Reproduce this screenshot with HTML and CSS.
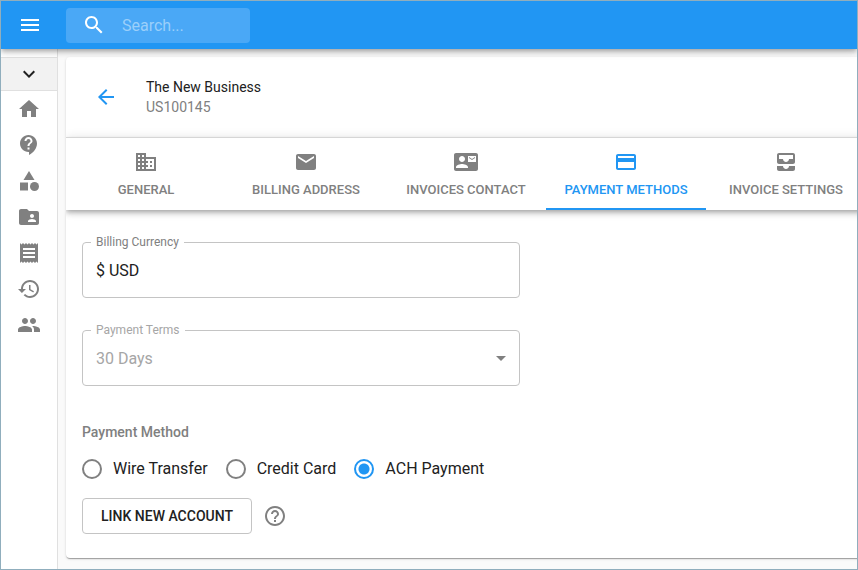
FILE: index.html
```html
<!DOCTYPE html>
<html lang="en">
<head>
<meta charset="utf-8">
<meta name="viewport" content="width=device-width, initial-scale=1">
<title>The New Business</title>
<link rel="stylesheet" href="styles.css">
</head>
<body>
<div class="app">
  <header class="topbar">
    <button class="icon-button" type="button" aria-label="Menu">
      <svg class="icon" viewBox="0 0 24 24"><path d="M3 18h18v-2H3v2zm0-5h18v-2H3v2zm0-7v2h18V6H3z"/></svg>
    </button>
    <label class="search">
      <svg class="icon" viewBox="0 0 24 24"><path d="M15.500 14h-.79l-.28-.27C15.410 12.590 16 11.110 16 9.500 16 5.910 13.090 3 9.500 3S3 5.910 3 9.500 5.910 16 9.500 16c1.610 0 3.090-.59 4.230-1.570l.27.28v.79l5 4.990L20.490 19l-4.990-5zm-6 0C7.010 14 5 11.990 5 9.500S7.010 5 9.500 5 14 7.010 14 9.500 11.990 14 9.500 14z"/></svg>
      <input class="search-input" type="text" placeholder="Search..." aria-label="Search">
    </label>
  </header>

  <div class="body">
    <nav class="sidebar" aria-label="Main">
      <button class="sidebar-toggle" type="button" aria-label="Expand menu">
        <svg class="icon" viewBox="0 0 24 24"><path d="M7.410 8.590 12 13.170l4.590-4.580L18 10l-6 6-6-6 1.410-1.410z"/></svg>
      </button>
      <a class="sidebar-link" href="#" aria-label="Home"><svg class="icon" viewBox="0 0 24 24"><path d="M10 20v-6h4v6h5v-8h3L12 3 2 12h3v8z"/></svg></a>
      <a class="sidebar-link" href="#" aria-label="Support"><svg class="icon" viewBox="0 0 24 24"><path d="M11.500 2C6.810 2 3 5.810 3 10.500S6.810 19 11.500 19h.5v3c4.860-2.340 8-7 8-11.500C20 5.810 16.190 2 11.500 2zm1 14.500h-2v-2h2v2zm0-3.500h-2c0-3.250 3-3 3-5 0-1.100-.9-2-2-2s-2 .9-2 2h-2c0-2.210 1.790-4 4-4s4 1.790 4 4c0 2.500-3 2.750-3 5z"/></svg></a>
      <a class="sidebar-link" href="#" aria-label="Categories"><svg class="icon" viewBox="0 0 24 24"><path d="m12 2-5.500 9h11z"/><circle cx="17.500" cy="17.500" r="4.500"/><path d="M3 13.500h8v8H3z"/></svg></a>
      <a class="sidebar-link" href="#" aria-label="Shared folders"><svg class="icon" viewBox="0 0 24 24"><path d="M20 6h-8l-2-2H4c-1.100 0-1.990.9-1.990 2L2 18c0 1.100.9 2 2 2h16c1.100 0 2-.9 2-2V8c0-1.100-.9-2-2-2zm-5 3c1.100 0 2 .9 2 2s-.9 2-2 2-2-.9-2-2 .9-2 2-2zm4 8h-8v-1c0-1.330 2.670-2 4-2s4 .67 4 2v1z"/></svg></a>
      <a class="sidebar-link" href="#" aria-label="Invoices"><svg class="icon" viewBox="0 0 24 24"><path d="M18 17H6v-2h12v2zm0-4H6v-2h12v2zm0-4H6V7h12v2zM3 22l1.500-1.500L6 22l1.500-1.500L9 22l1.500-1.500L12 22l1.500-1.500L15 22l1.500-1.500L18 22l1.500-1.500L21 22V2l-1.500 1.500L18 2l-1.500 1.500L15 2l-1.500 1.500L12 2l-1.500 1.500L9 2 7.500 3.500 6 2 4.500 3.500 3 2v20z"/></svg></a>
      <a class="sidebar-link" href="#" aria-label="History"><svg class="icon" viewBox="0 0 24 24"><path d="M13 3c-4.970 0-9 4.030-9 9H1l3.890 3.890.07.14L9 12H6c0-3.870 3.130-7 7-7s7 3.130 7 7-3.130 7-7 7c-1.930 0-3.680-.79-4.940-2.060l-1.420 1.420C8.270 19.990 10.510 21 13 21c4.970 0 9-4.030 9-9s-4.030-9-9-9zm-1 5v5l4.280 2.540.72-1.210-3.500-2.080V8H12z"/></svg></a>
      <a class="sidebar-link" href="#" aria-label="Users"><svg class="icon" viewBox="0 0 24 24"><path d="M16 11c1.660 0 2.990-1.340 2.990-3S17.660 5 16 5s-3 1.340-3 3 1.340 3 3 3zm-8 0c1.660 0 2.990-1.340 2.990-3S9.660 5 8 5 5 6.340 5 8s1.340 3 3 3zm0 2c-2.330 0-7 1.170-7 3.500V19h14v-2.500c0-2.330-4.670-3.500-7-3.500zm8 0c-.29 0-.62.020-.97.050 1.160.84 1.970 1.970 1.970 3.450V19h6v-2.500c0-2.330-4.670-3.500-7-3.500z"/></svg></a>
    </nav>

    <main class="content">
      <section class="card">
        <div class="card-header">
          <a class="back" href="#" aria-label="Back"><svg class="icon" viewBox="0 0 24 24"><path d="M20 11H7.830l5.590-5.590L12 4l-8 8 8 8 1.410-1.410L7.830 13H20v-2z"/></svg></a>
          <div>
            <h1 class="title">The New Business</h1>
            <p class="subtitle">US100145</p>
          </div>
        </div>

        <div class="tabs" role="tablist">
          <button class="tab" type="button" role="tab"><svg class="icon" viewBox="0 0 24 24"><path d="M12 7V3H2v18h20V7H12zM6 19H4v-2h2v2zm0-4H4v-2h2v2zm0-4H4V9h2v2zm0-4H4V5h2v2zm4 12H8v-2h2v2zm0-4H8v-2h2v2zm0-4H8V9h2v2zm0-4H8V5h2v2zm10 12h-8v-2h2v-2h-2v-2h2v-2h-2V9h8v10zm-2-8h-2v2h2v-2zm0 4h-2v2h2v-2z"/></svg>GENERAL</button>
          <button class="tab" type="button" role="tab"><svg class="icon" viewBox="0 0 24 24"><path d="M20 4H4c-1.100 0-1.990.9-1.990 2L2 18c0 1.100.9 2 2 2h16c1.100 0 2-.9 2-2V6c0-1.100-.9-2-2-2zm0 4-8 5-8-5V6l8 5 8-5v2z"/></svg>BILLING ADDRESS</button>
          <button class="tab" type="button" role="tab"><svg class="icon" viewBox="0 0 24 24"><path d="M21 8V7l-3 2-3-2v1l3 2 3-2zm1-5H2C.9 3 0 3.900 0 5v14c0 1.100.9 2 2 2h20c1.100 0 1.990-.9 1.990-2L24 5c0-1.100-.9-2-2-2zM8 6c1.660 0 3 1.340 3 3s-1.340 3-3 3-3-1.340-3-3 1.340-3 3-3zm6 12H2v-1c0-2 4-3.100 6-3.100s6 1.100 6 3.100v1zm8-6h-8V6h8v6z"/></svg>INVOICES CONTACT</button>
          <button class="tab tab-active" type="button" role="tab" aria-selected="true"><svg class="icon" viewBox="0 0 24 24"><path d="M20 4H4c-1.110 0-1.990.89-1.990 2L2 18c0 1.110.89 2 2 2h16c1.110 0 2-.89 2-2V6c0-1.110-.89-2-2-2zm0 14H4v-6h16v6zm0-10H4V6h16v2z"/></svg>PAYMENT METHODS</button>
          <button class="tab" type="button" role="tab"><svg class="icon" viewBox="0 0 24 24"><path d="M19 3H5c-1.100 0-2 .9-2 2v7c0 1.100.9 2 2 2h14c1.100 0 2-.9 2-2V5c0-1.100-.9-2-2-2zm0 6h-4c0 1.620-1.380 3-3 3s-3-1.380-3-3H5V5h14v4zm-4 7h6v3c0 1.100-.9 2-2 2H5c-1.100 0-2-.9-2-2v-3h6c0 1.660 1.340 3 3 3s3-1.340 3-3z"/></svg>INVOICE SETTINGS</button>
        </div>

        <form class="form">
          <div class="field">
            <label class="field-label" for="currency">Billing Currency</label>
            <input class="field-control" id="currency" type="text" value="$ USD">
          </div>
          <div class="field field-disabled">
            <label class="field-label" for="terms">Payment Terms</label>
            <select class="field-control" id="terms" disabled><option>30 Days</option></select>
            <svg class="icon field-arrow" viewBox="0 0 24 24"><path d="m7 10 5 5 5-5z"/></svg>
          </div>
          <fieldset class="methods">
            <legend class="methods-title">Payment Method</legend>
            <div class="methods-options">
              <label class="option"><input class="radio" type="radio" name="method">Wire Transfer</label>
              <label class="option"><input class="radio" type="radio" name="method">Credit Card</label>
              <label class="option"><input class="radio" type="radio" name="method" checked>ACH Payment</label>
            </div>
          </fieldset>
          <div class="actions">
            <button class="link-account" type="button">LINK NEW ACCOUNT</button>
            <button class="help" type="button" aria-label="Help"><svg class="icon" viewBox="0 0 24 24"><path d="M11 18h2v-2h-2v2zm1-16C6.480 2 2 6.480 2 12s4.480 10 10 10 10-4.480 10-10S17.520 2 12 2zm0 18c-4.410 0-8-3.590-8-8s3.590-8 8-8 8 3.590 8 8-3.590 8-8 8zm0-14c-2.210 0-4 1.790-4 4h2c0-1.100.9-2 2-2s2 .9 2 2c0 2-3 1.750-3 5h2c0-2.250 3-2.500 3-5 0-2.210-1.790-4-4-4z"/></svg></button>
          </div>
        </form>
      </section>
    </main>
  </div>
</div>
</body>
</html>
```

FILE: styles.css
```css
* {
  box-sizing: border-box;
}

body {
  margin: 0;
  font-family: Roboto, "Liberation Sans", sans-serif;
  font-size: 16px;
  color: #212121;
}

button,
input,
select {
  font: inherit;
  color: inherit;
}

button {
  padding: 0;
  border: 0;
  background: none;
}

.app {
  display: flex;
  flex-direction: column;
  min-height: 100vh;
  border: 1px solid #90aebd;
  background: #fafafa;
  overflow: hidden;
}

.icon {
  display: block;
  flex: none;
  width: 24px;
  height: 24px;
  fill: currentColor;
}

/* Top bar */
.topbar {
  position: relative;
  z-index: 2;
  display: flex;
  align-items: center;
  gap: 24px;
  height: 48px;
  padding: 0 17px;
  background: #2196f3;
  color: #fff;
  box-shadow: 0 2px 4px -1px rgba(0, 0, 0, .2), 0 4px 5px rgba(0, 0, 0, .14), 0 1px 10px rgba(0, 0, 0, .12);
}

.search {
  display: flex;
  align-items: center;
  gap: 16px;
  width: 184px;
  height: 35px;
  padding-left: 16px;
  border-radius: 4px;
  background: #4aa8f6;
}

.search-input {
  flex: 1;
  min-width: 0;
  padding: 0;
  border: 0;
  outline: 0;
  background: none;
}

.search-input::placeholder {
  color: #9bcffa;
  opacity: 1;
}

.body {
  display: flex;
  flex: 1;
}

/* Sidebar */
.sidebar {
  flex: none;
  width: 57px;
  padding-top: 8px;
  border-right: 1px solid #e0e0e0;
  background: #fff;
}

.sidebar-toggle {
  display: grid;
  place-items: center;
  width: 100%;
  height: 34px;
  border: solid #e0e0e0;
  border-width: 1px 0;
  background: #f2f2f2;
}

.sidebar-link {
  display: grid;
  place-items: center;
  height: 36px;
  color: #808080;
}

/* Card */
.content {
  flex: 1;
  min-width: 0;
  padding: 8px 0 8px 8px;
}

.card {
  min-width: 800px;
  border-radius: 4px;
  background: #fff;
  box-shadow: 0 2px 1px -1px rgba(0, 0, 0, .2), 0 1px 1px rgba(0, 0, 0, .14), 0 1px 3px rgba(0, 0, 0, .12);
}

.card-header {
  display: flex;
  align-items: center;
  gap: 28px;
  height: 80px;
  padding: 0 28px;
}

.back {
  color: #2196f3;
}

.title,
.subtitle {
  margin: 0;
  font-size: 14px;
  font-weight: 400;
  line-height: 20px;
}

.subtitle {
  color: #808080;
}

/* The shadow is clipped at the sides so it stays within the card */
.tabs {
  display: grid;
  grid-template-columns: repeat(5, 1fr);
  border-top: 1px solid #d6d6d6;
  background: #fff;
  box-shadow: 0 2px 4px -1px rgba(0, 0, 0, .2), 0 4px 5px rgba(0, 0, 0, .14), 0 1px 10px rgba(0, 0, 0, .12);
  clip-path: inset(-12px 0 -16px 0);
}

.tab {
  display: flex;
  flex-direction: column;
  align-items: center;
  gap: 6px;
  height: 72px;
  padding-top: 12px;
  border-bottom: 2px solid transparent;
  color: #808080;
  font-size: 13px;
  font-weight: 500;
  line-height: 20px;
  white-space: nowrap;
}

.tab-active {
  border-color: #2196f3;
  color: #2196f3;
}

/* Form */
.form {
  padding: 32px 16px 24px;
}

.field {
  position: relative;
  max-width: 438px;
  margin-bottom: 32px;
}

.field-label {
  position: absolute;
  top: -8px;
  left: 9px;
  padding: 0 5px;
  background: #fff;
  color: #808080;
  font-size: 12px;
  line-height: 16px;
}

.field-control {
  display: block;
  width: 100%;
  height: 56px;
  padding: 0 13px;
  border: 1px solid #c4c4c4;
  border-radius: 4px;
  outline: 0;
  appearance: none;
  background: #fff;
}

.field-disabled .field-label,
.field-disabled .field-control {
  color: #a6a6a6;
  opacity: 1;
}

.field-arrow {
  position: absolute;
  top: 16px;
  right: 7px;
  color: #808080;
  pointer-events: none;
}

.methods {
  margin: 36px 0 0;
  padding: 0;
  border: 0;
}

.methods-title {
  padding: 0;
  color: #808080;
  font-size: 14px;
  font-weight: 500;
  line-height: 20px;
}

.methods-options {
  display: flex;
  gap: 18px;
  padding: 15px 0 17px;
}

.option {
  display: flex;
  align-items: center;
  gap: 11px;
  line-height: 24px;
}

.radio {
  width: 20px;
  height: 20px;
  margin: 0;
  border: 2px solid #808080;
  border-radius: 50%;
  appearance: none;
}

.radio:checked {
  border-color: #2196f3;
  background: radial-gradient(circle, #2196f3 5px, transparent 6px);
}

.actions {
  display: flex;
  align-items: center;
  gap: 11px;
}

.link-account {
  height: 36px;
  padding: 0 18px;
  border: 1px solid #c4c4c4;
  border-radius: 4px;
  font-size: 14px;
  font-weight: 500;
}

.help {
  color: #808080;
}
```
